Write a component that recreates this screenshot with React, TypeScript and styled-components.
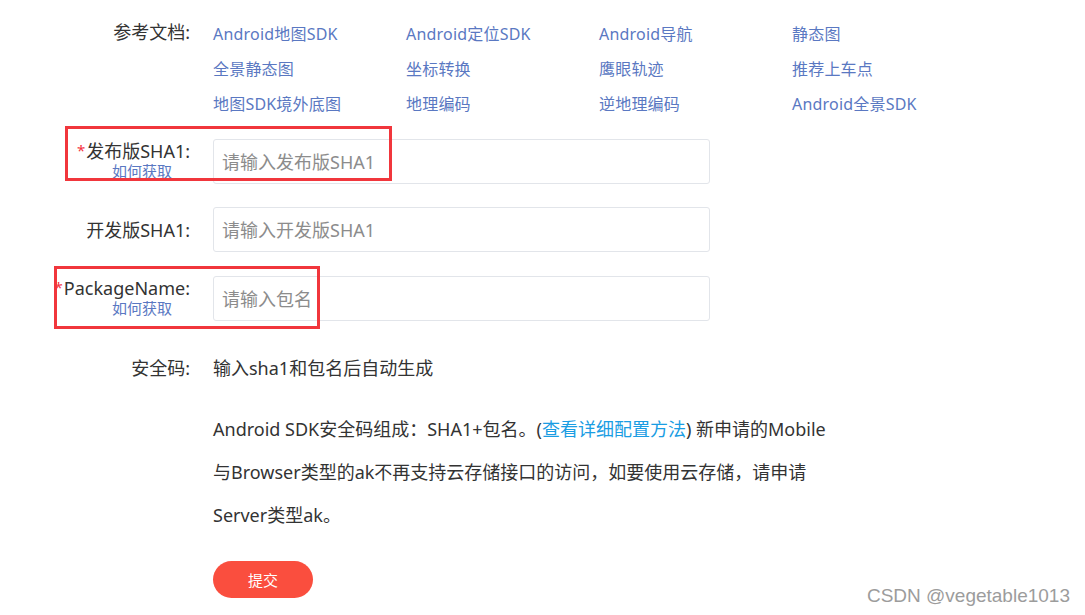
import React from "react";
import styled, { createGlobalStyle } from "styled-components";

const Global = createGlobalStyle`
  html, body { margin: 0; padding: 0; background: #fff; }
  body {
    font-family: "Noto Sans", "Noto Sans CJK SC", sans-serif;
    color: #333;
    width: 1085px;
    height: 615px;
    overflow: hidden;
  }
  * { box-sizing: border-box; }
`;

const Page = styled.div`
  position: relative;
  width: 1085px;
  height: 615px;
  padding-top: 15px;
`;

const Row = styled.div<{ $mt?: number }>`
  position: relative;
  display: grid;
  grid-template-columns: 190px 497px;
  column-gap: 23px;
  align-items: center;
  margin-top: ${(p) => p.$mt ?? 0}px;
`;

const Label = styled.div<{ $top?: boolean }>`
  align-self: ${(p) => (p.$top ? "start" : "center")};
  text-align: right;
  font-size: 18px;
  line-height: ${(p) => (p.$top ? "35px" : "22px")};
  color: #333;
  white-space: nowrap;
`;

const LabelMain = styled.span`
  display: block;
  line-height: 21px;
`;

const Req = styled.span`
  color: #f5333f;
  font-size: 15px;
  vertical-align: 2px;
  margin-right: 1px;
`;

const HowTo = styled.a`
  display: block;
  font-size: 15px;
  line-height: 19px;
  color: #5a78c2;
  padding-right: 18px;
  margin-bottom: 2px;
  text-decoration: none;
`;

const LinkGrid = styled.div`
  display: grid;
  grid-template-columns: repeat(4, 193px);
  grid-auto-rows: 35px;
  align-items: center;
`;

const DocLink = styled.a`
  font-size: 16px;
  letter-spacing: 0.2px;
  color: #5a78c2;
  text-decoration: none;
  white-space: nowrap;
`;

const Input = styled.input`
  width: 497px;
  height: 45px;
  border: 1px solid #e2e5ea;
  border-radius: 3px;
  padding: 0 8px;
  font-family: inherit;
  font-size: 18px;
  color: #333;
  outline: none;
  &::placeholder { color: #8c8c8c; }
`;

const Text = styled.div`
  font-size: 18px;
  line-height: 24px;
  color: #333;
  white-space: nowrap;
`;

const Para = styled.p`
  grid-column: 2;
  margin: 0;
  font-size: 18px;
  line-height: 43px;
  color: #333;
  white-space: nowrap;
`;

const InfoLink = styled.a`
  color: #1a9de3;
  text-decoration: none;
`;

const Submit = styled.button`
  grid-column: 2;
  width: 100px;
  height: 37px;
  border: none;
  border-radius: 19px;
  background: #fa4e3e;
  color: #fff;
  font-family: inherit;
  font-size: 15px;
  cursor: pointer;
`;

const Highlight = styled.div<{ $l: number; $t: number; $w: number; $h: number }>`
  position: absolute;
  left: ${(p) => p.$l}px;
  top: ${(p) => p.$t}px;
  width: ${(p) => p.$w}px;
  height: ${(p) => p.$h}px;
  border: 3px solid #f1363c;
  pointer-events: none;
`;

const Watermark = styled.div`
  position: absolute;
  right: 15px;
  bottom: 8px;
  font-family: "Liberation Sans", Arial, sans-serif;
  font-size: 19px;
  color: #9c9c9c;
`;

const docs = [
  "Android地图SDK",
  "Android定位SDK",
  "Android导航",
  "静态图",
  "全景静态图",
  "坐标转换",
  "鹰眼轨迹",
  "推荐上车点",
  "地图SDK境外底图",
  "地理编码",
  "逆地理编码",
  "Android全景SDK",
];

export default function App() {
  return (
    <>
      <Global />
      <Page>
        <Row>
          <Label $top>参考文档:</Label>
          <LinkGrid>
            {docs.map((d) => (
              <DocLink key={d} href="#">
                {d}
              </DocLink>
            ))}
          </LinkGrid>
        </Row>

        <Row $mt={19}>
          <Label>
            <LabelMain>
              <Req>*</Req>发布版SHA1:
            </LabelMain>
            <HowTo href="#">如何获取</HowTo>
          </Label>
          <Input placeholder="请输入发布版SHA1" />
          <Highlight $l={65} $t={-13} $w={327} $h={55} />
        </Row>

        <Row $mt={23}>
          <Label>开发版SHA1:</Label>
          <Input placeholder="请输入开发版SHA1" />
        </Row>

        <Row $mt={24}>
          <Label>
            <LabelMain>
              <Req>*</Req>PackageName:
            </LabelMain>
            <HowTo href="#">如何获取</HowTo>
          </Label>
          <Input placeholder="请输入包名" />
          <Highlight $l={54} $t={-10} $w={266} $h={63} />
        </Row>

        <Row $mt={35}>
          <Label>安全码:</Label>
          <Text>输入sha1和包名后自动生成</Text>
        </Row>

        <Row $mt={28}>
          <Para>
            Android SDK安全码组成：SHA1+包名。(<InfoLink href="#">查看详细配置方法</InfoLink>) 新申请的Mobile
            <br />
            与Browser类型的ak不再支持云存储接口的访问，如要使用云存储，请申请
            <br />
            Server类型ak。
          </Para>
        </Row>

        <Row $mt={24}>
          <Submit>提交</Submit>
        </Row>

        <Watermark>CSDN @vegetable1013</Watermark>
      </Page>
    </>
  );
}
